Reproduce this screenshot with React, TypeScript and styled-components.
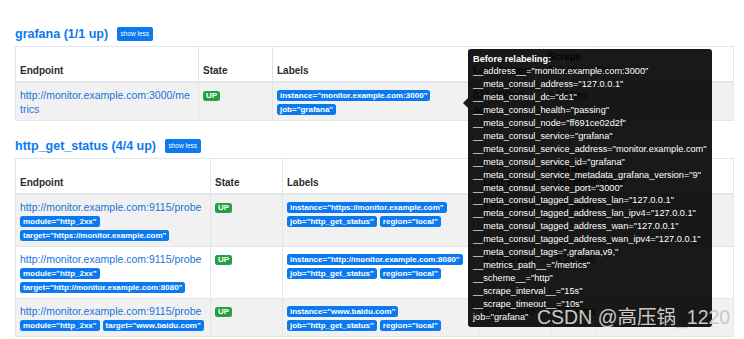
import React from "react";
import styled, { createGlobalStyle } from "styled-components";

const Global = createGlobalStyle`
  html, body { margin: 0; padding: 0; background: #ffffff; }
  body { font-family: "Liberation Sans", Arial, sans-serif; color: #212529; }
`;

const Page = styled.div`
  position: relative;
  width: 744px;
  height: 339px;
  box-sizing: border-box;
  padding: 27px 11px 0 15px;
  overflow: hidden;
`;

const Section = styled.section<{ $gap?: number }>`
  margin-top: ${(p) => p.$gap ?? 0}px;
`;

const SectionHeader = styled.div`
  display: flex;
  align-items: center;
  gap: 9px;
  height: 14px;
  margin-bottom: 5px;
`;

const Title = styled.h2`
  margin: 0;
  font-size: 12.5px;
  font-weight: bold;
  color: #0b7af0;
  line-height: 14px;
`;

const ShowLess = styled.button`
  height: 14px;
  padding: 0 3.5px;
  border: none;
  border-radius: 2px;
  background: #0b7af0;
  color: #fff;
  font-family: "Liberation Sans", Arial, sans-serif;
  font-size: 6.5px;
  line-height: 14px;
`;

const Table = styled.table`
  width: 718px;
  border-collapse: collapse;
  table-layout: fixed;
  font-size: 10.5px;
  line-height: 14px;

  th, td {
    border: 1px solid #e3e6e9;
    padding: 4px;
    text-align: left;
  }
  th {
    vertical-align: bottom;
    font-size: 10px;
    font-weight: bold;
    color: #2a2d30;
    padding: 3px 4px;
    border-bottom: 2px solid #e3e6e9;
  }
  td { vertical-align: top; padding-top: 5px; }
  tbody tr:nth-of-type(odd) { background: #f1f1f1; }
`;

const EndpointLink = styled.a<{ $max?: number }>`
  display: block;
  color: #1a73dc;
  text-decoration: none;
  word-break: break-all;
  max-width: ${(p) => (p.$max ? `${p.$max}px` : "none")};
`;

const Badge = styled.span<{ $tone: "blue" | "green" }>`
  display: inline-block;
  vertical-align: middle;
  height: ${(p) => (p.$tone === "green" ? 10 : 11)}px;
  line-height: ${(p) => (p.$tone === "green" ? 10 : 11)}px;
  padding: 0 3px;
  border-radius: 2.5px;
  background: ${(p) => (p.$tone === "green" ? "#22a242" : "#0b7af0")};
  color: #fff;
  font-size: 8px;
  font-weight: bold;
  white-space: nowrap;
`;

const BadgeLines = styled.div`
  display: flex;
  flex-wrap: wrap;
  align-items: center;
  column-gap: 3px;
  row-gap: 3px;
  padding: 1.5px 0;
`;

const Tooltip = styled.div`
  position: absolute;
  left: 468px;
  top: 49px;
  width: 244px;
  box-sizing: border-box;
  padding: 3.5px 5px;
  background: rgba(0, 0, 0, 0.9);
  border-radius: 3px;
  color: #fff;
  font-size: 9.2px;
  line-height: 12.9px;
  white-space: nowrap;

  &::before {
    content: "";
    position: absolute;
    left: -5px;
    top: 49px;
    border-style: solid;
    border-width: 5px 5px 5px 0;
    border-color: transparent rgba(0, 0, 0, 0.9) transparent transparent;
  }
`;

const TipLine = styled.div<{ $bold?: boolean }>`
  font-weight: ${(p) => (p.$bold ? "bold" : "normal")};
`;

const Watermark = styled.div`
  position: absolute;
  left: 537px;
  top: 305px;
  font-family: "Liberation Sans", "Noto Sans CJK SC", sans-serif;
  font-size: 19.5px;
  line-height: 24px;
  color: #c9c9c9;
  white-space: nowrap;
`;

type Target = {
  endpoint: string;
  params: string[];
  labels: string[];
  last: string;
  duration: string;
};

const grafana: Target[] = [
  {
    endpoint: "http://monitor.example.com:3000/metrics",
    params: [],
    labels: ['instance="monitor.example.com:3000"', 'job="grafana"'],
    last: "821.000ms ago",
    duration: "6.641ms",
  },
];

const http: Target[] = [
  {
    endpoint: "http://monitor.example.com:9115/probe",
    params: ['module="http_2xx"', 'target="https://monitor.example.com"'],
    labels: ['instance="https://monitor.example.com"', 'job="http_get_status"', 'region="local"'],
    last: "1.512s ago",
    duration: "10.36ms",
  },
  {
    endpoint: "http://monitor.example.com:9115/probe",
    params: ['module="http_2xx"', 'target="http://monitor.example.com:8080"'],
    labels: ['instance="http://monitor.example.com:8080"', 'job="http_get_status"', 'region="local"'],
    last: "4.103s ago",
    duration: "3.218ms",
  },
  {
    endpoint: "http://monitor.example.com:9115/probe",
    params: ['module="http_2xx"', 'target="www.baidu.com"'],
    labels: ['instance="www.baidu.com"', 'job="http_get_status"', 'region="local"'],
    last: "9.274s ago",
    duration: "9.176ms",
  },
];

const tipLines = [
  '__address__="monitor.example.com:3000"',
  '__meta_consul_address="127.0.0.1"',
  '__meta_consul_dc="dc1"',
  '__meta_consul_health="passing"',
  '__meta_consul_node="ff691ce02d2f"',
  '__meta_consul_service="grafana"',
  '__meta_consul_service_address="monitor.example.com"',
  '__meta_consul_service_id="grafana"',
  '__meta_consul_service_metadata_grafana_version="9"',
  '__meta_consul_service_port="3000"',
  '__meta_consul_tagged_address_lan="127.0.0.1"',
  '__meta_consul_tagged_address_lan_ipv4="127.0.0.1"',
  '__meta_consul_tagged_address_wan="127.0.0.1"',
  '__meta_consul_tagged_address_wan_ipv4="127.0.0.1"',
  '__meta_consul_tags=",grafana,v9,"',
  '__metrics_path__="/metrics"',
  '__scheme__="http"',
  '__scrape_interval__="15s"',
  '__scrape_timeout__="10s"',
  'job="grafana"',
];

function TargetTable({ rows, widths, linkMax }: { rows: Target[]; widths: number[]; linkMax?: number }) {
  return (
    <Table>
      <colgroup>
        {widths.map((w, i) => (
          <col key={i} style={{ width: w }} />
        ))}
      </colgroup>
      <thead>
        <tr>
          <th>Endpoint</th>
          <th>State</th>
          <th>Labels</th>
          <th>Last Scrape</th>
          <th>Scrape Duration</th>
          <th>Error</th>
        </tr>
      </thead>
      <tbody>
        {rows.map((r, i) => (
          <tr key={i}>
            <td>
              <EndpointLink href="#" $max={linkMax}>{r.endpoint}</EndpointLink>
              {r.params.length > 0 && (
                <BadgeLines>
                  {r.params.map((p) => (
                    <Badge key={p} $tone="blue">{p}</Badge>
                  ))}
                </BadgeLines>
              )}
            </td>
            <td>
              <Badge $tone="green">UP</Badge>
            </td>
            <td>
              <BadgeLines>
                {r.labels.map((l) => (
                  <Badge key={l} $tone="blue">{l}</Badge>
                ))}
              </BadgeLines>
            </td>
            <td>{r.last}</td>
            <td>{r.duration}</td>
            <td></td>
          </tr>
        ))}
      </tbody>
    </Table>
  );
}

export default function App() {
  return (
    <>
      <Global />
      <Page>
        <Section>
          <SectionHeader>
            <Title>grafana (1/1 up)</Title>
            <ShowLess>show less</ShowLess>
          </SectionHeader>
          <TargetTable rows={grafana} widths={[183, 74, 196, 75, 49, 141]} linkMax={172} />
        </Section>
        <Section $gap={18}>
          <SectionHeader>
            <Title>http_get_status (4/4 up)</Title>
            <ShowLess>show less</ShowLess>
          </SectionHeader>
          <TargetTable rows={http} widths={[195, 72, 196, 72, 45, 138]} />
        </Section>
        <Tooltip>
          <TipLine $bold>Before relabeling:</TipLine>
          {tipLines.map((t) => (
            <TipLine key={t}>{t}</TipLine>
          ))}
        </Tooltip>
        <Watermark>CSDN @高压锅_1220</Watermark>
      </Page>
    </>
  );
}
